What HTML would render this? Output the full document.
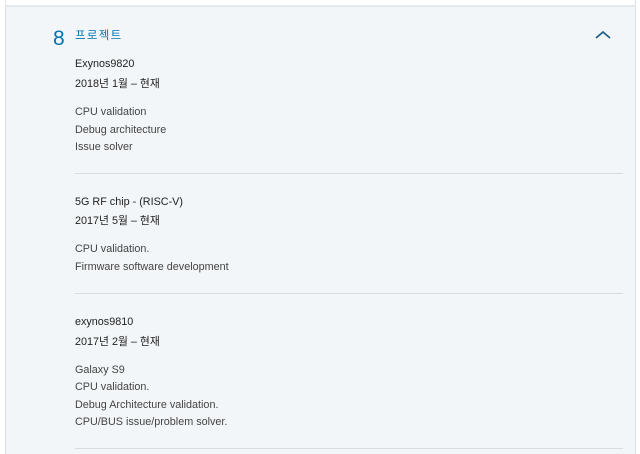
<!DOCTYPE html>
<html><head><meta charset="utf-8"><style>
body{margin:0;width:640px;height:454px;background:#fff;overflow:hidden;font-family:"Liberation Sans","Noto Sans CJK KR",sans-serif;}
.top{position:absolute;left:5px;top:0;width:629px;height:5px;background:#fff;border-left:1px solid #e0e3e6;border-right:1px solid #e0e3e6;}
.line{position:absolute;left:5px;top:5px;width:631px;height:2px;background:#e4e7ea;}
.panel{position:absolute;left:5px;top:7px;width:629px;height:447px;background:#f3f6f8;border-left:1px solid #dcdfe2;border-right:1px solid #dcdfe2;}
.num{position:absolute;left:53px;top:27px;font-size:21px;color:#0073b1;}
.hd{position:absolute;left:75px;top:27px;font-size:11.5px;color:#0073b1;letter-spacing:1.3px;}
.t{position:absolute;left:75px;font-size:10.8px;color:#222;}
.d{position:absolute;left:75px;font-size:10.8px;color:#444;}
.hr{position:absolute;left:75px;width:548px;height:1px;background:#d8dcdf;}
</style></head><body>
<div class="top"></div><div class="line"></div><div class="panel"></div>
<div class="num">8</div><div class="hd">프로젝트</div>
<svg style="position:absolute;left:594px;top:30px" width="18" height="10"><path d="M2 8 L9 2 L16 8" stroke="#1e5f8a" stroke-width="1.8" fill="none"/></svg>
<div class="t" style="top:58px">Exynos9820</div>
<div class="t" style="top:75px">2018년 1월 – 현재</div>
<div class="d" style="top:106px">CPU validation</div>
<div class="d" style="top:124px">Debug architecture</div>
<div class="d" style="top:141px">Issue solver</div>
<div class="hr" style="top:173px"></div>
<div class="t" style="top:196px">5G RF chip - (RISC-V)</div>
<div class="t" style="top:212px">2017년 5월 – 현재</div>
<div class="d" style="top:243px">CPU validation.</div>
<div class="d" style="top:261px">Firmware software development</div>
<div class="hr" style="top:293px"></div>
<div class="t" style="top:316px">exynos9810</div>
<div class="t" style="top:333px">2017년 2월 – 현재</div>
<div class="d" style="top:364px">Galaxy S9</div>
<div class="d" style="top:381px">CPU validation.</div>
<div class="d" style="top:399px">Debug Architecture validation.</div>
<div class="d" style="top:416px">CPU/BUS issue/problem solver.</div>
<div class="hr" style="top:448px"></div>
</body></html>
